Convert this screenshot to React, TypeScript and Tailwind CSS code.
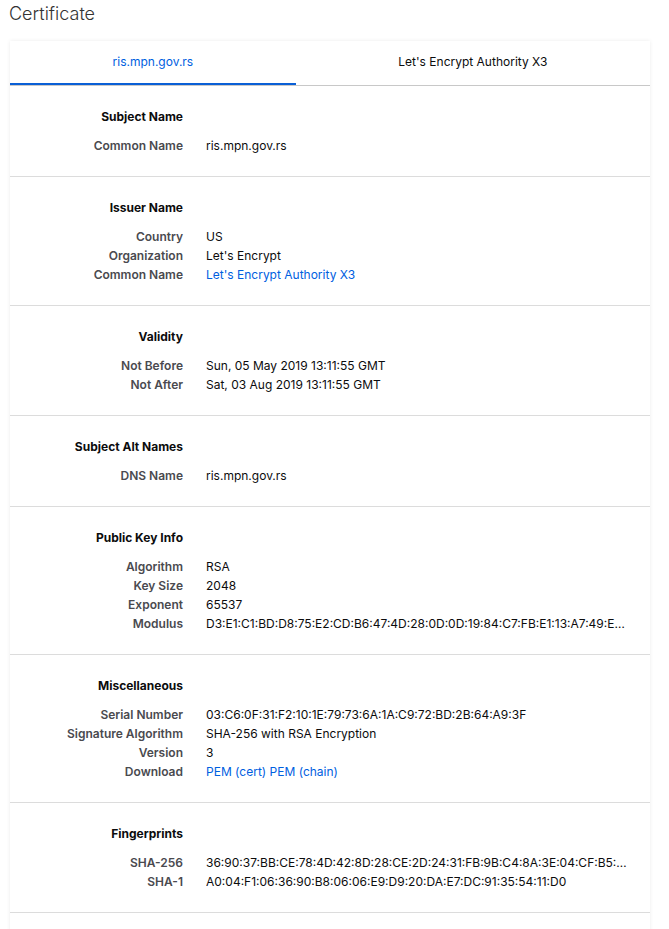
import { useState } from "react"

type Row = { label: string; value: string; links?: string[]; truncate?: boolean }
type Section = { title: string; rows: Row[] }

const SECTIONS: Section[] = [
  { title: "Subject Name", rows: [{ label: "Common Name", value: "ris.mpn.gov.rs" }] },
  {
    title: "Issuer Name",
    rows: [
      { label: "Country", value: "US" },
      { label: "Organization", value: "Let's Encrypt" },
      { label: "Common Name", value: "", links: ["Let's Encrypt Authority X3"] },
    ],
  },
  {
    title: "Validity",
    rows: [
      { label: "Not Before", value: "Sun, 05 May 2019 13:11:55 GMT" },
      { label: "Not After", value: "Sat, 03 Aug 2019 13:11:55 GMT" },
    ],
  },
  { title: "Subject Alt Names", rows: [{ label: "DNS Name", value: "ris.mpn.gov.rs" }] },
  {
    title: "Public Key Info",
    rows: [
      { label: "Algorithm", value: "RSA" },
      { label: "Key Size", value: "2048" },
      { label: "Exponent", value: "65537" },
      {
        label: "Modulus",
        value:
          "D3:E1:C1:BD:D8:75:E2:CD:B6:47:4D:28:0D:0D:19:84:C7:FB:E1:13:A7:49:EF:5A:9C:31:0E:42:77:B8:1F:60",
        truncate: true,
      },
    ],
  },
  {
    title: "Miscellaneous",
    rows: [
      { label: "Serial Number", value: "03:C6:0F:31:F2:10:1E:79:73:6A:1A:C9:72:BD:2B:64:A9:3F" },
      { label: "Signature Algorithm", value: "SHA-256 with RSA Encryption" },
      { label: "Version", value: "3" },
      { label: "Download", value: "", links: ["PEM (cert)", "PEM (chain)"] },
    ],
  },
  {
    title: "Fingerprints",
    rows: [
      {
        label: "SHA-256",
        value:
          "36:90:37:BB:CE:78:4D:42:8D:28:CE:2D:24:31:FB:9B:C4:8A:3E:04:CF:B5:D2:11:7A:90:3C:EE:41:08:6B:2A",
        truncate: true,
      },
      { label: "SHA-1", value: "A0:04:F1:06:36:90:B8:06:06:E9:D9:20:DA:E7:DC:91:35:54:11:D0" },
    ],
  },
  {
    title: "Basic Constraints",
    rows: [{ label: "Certificate Authority", value: "No" }],
  },
]

const TABS = ["ris.mpn.gov.rs", "Let's Encrypt Authority X3"]

function CertSection({ section }: { section: Section }) {
  return (
    <section className="border-b border-[#dcdcdc] pt-[21px] pb-[21px] pr-[20px] text-[12px] leading-[19px]">
      <h3 className="w-[173px] text-right font-bold text-[#0c0c0d] mb-[10px]">{section.title}</h3>
      {section.rows.map((r) => (
        <div key={r.label} className="flex">
          <div className="w-[173px] shrink-0 text-right font-semibold text-[#4a4a4f] whitespace-nowrap">
            {r.label}
          </div>
          <div className="ml-[23px] min-w-0 flex-1 text-[#0c0c0d] truncate">
            {r.links
              ? r.links.map((l, i) => (
                  <a key={l} href="#" className="text-[#0060df]">
                    {i > 0 ? " " : ""}
                    {l}
                  </a>
                ))
              : r.value}
          </div>
        </div>
      ))}
    </section>
  )
}

export default function App() {
  const [tab, setTab] = useState(0)

  return (
    <div className="min-h-screen bg-white font-['Inter',sans-serif] text-[#0c0c0d]">
      <h1 className="px-[9px] text-[18px] leading-[27px] font-light text-[#333333] mb-[14px]">
        Certificate
      </h1>
      <div className="ml-[10px] w-[640px] bg-white shadow-[0_0_4px_rgba(0,0,0,0.08)]">
        <div className="flex border-b border-[#c8c8c8]">
          {TABS.map((t, i) => (
            <button
              key={t}
              onClick={() => setTab(i)}
              className={
                i === tab
                  ? "flex-auto h-[44px] border-b-2 border-[#0a5fd6] text-[12px] text-[#0060df] cursor-pointer"
                  : "flex-auto h-[44px] border-b-2 border-transparent text-[12px] text-[#0c0c0d] cursor-pointer"
              }
            >
              {t}
            </button>
          ))}
        </div>
        {SECTIONS.map((s) => (
          <CertSection key={s.title} section={s} />
        ))}
      </div>
    </div>
  )
}
